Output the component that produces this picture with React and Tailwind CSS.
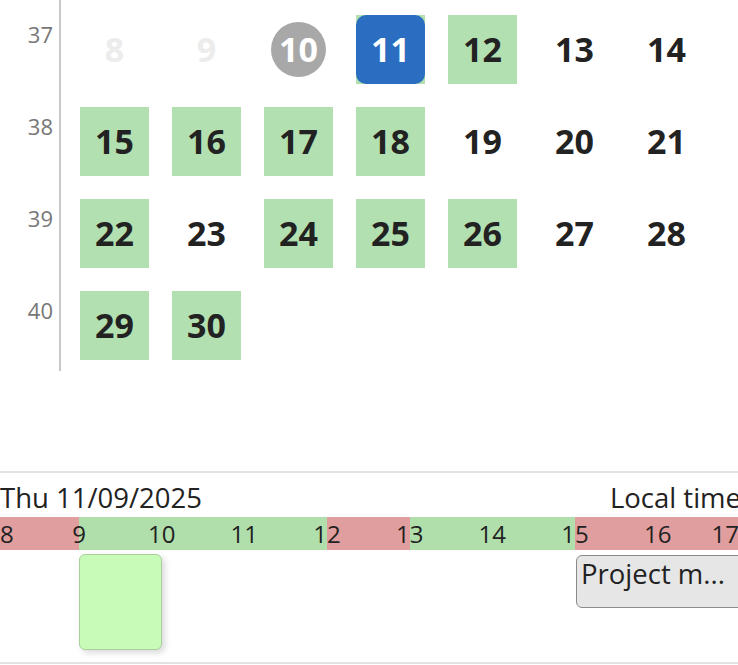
import React from 'react';

const weeks = [
  { no: 37, days: [8, 9, 10, 11, 12, 13, 14] },
  { no: 38, days: [15, 16, 17, 18, 19, 20, 21] },
  { no: 39, days: [22, 23, 24, 25, 26, 27, 28] },
  { no: 40, days: [29, 30] },
];

const available = new Set([11, 12, 15, 16, 17, 18, 22, 24, 25, 26, 29, 30]);
const past = new Set([8, 9]);
const TODAY = 10;
const SELECTED = 11;

const HOUR_W = 82.67;
const START_X = -3.67;
const hourX = (h) => START_X + (h - 8) * HOUR_W;

const segments = [
  { from: 8, to: 9, free: false },
  { from: 9, to: 12, free: true },
  { from: 12, to: 13, free: false },
  { from: 13, to: 15, free: true },
  { from: 15, to: 18, free: false },
];

const DayCell = ({ day }) => {
  if (day === TODAY) {
    return (
      <div className="flex items-center justify-center">
        <div className="w-[55px] h-[55px] rounded-full bg-[#a8a8a8] flex items-center justify-center text-white text-[34px] font-bold">
          {day}
        </div>
      </div>
    );
  }
  if (day === SELECTED) {
    return (
      <div className="bg-[#b2e0b0]">
        <div className="w-full h-full rounded-[10px] bg-[#2b6dc0] flex items-center justify-center text-white text-[34px] font-bold">
          {day}
        </div>
      </div>
    );
  }
  return (
    <div
      className={
        'flex items-center justify-center text-[34px] font-bold ' +
        (past.has(day) ? 'text-[#ececec]' : 'text-[#222]') +
        (available.has(day) ? ' bg-[#b2e0b0]' : '')
      }
    >
      {day}
    </div>
  );
};

export default function App() {
  return (
    <div
      className="w-[738px] h-[665px] overflow-hidden bg-white"
      style={{ fontFamily: '"Open Sans", "Noto Sans", sans-serif' }}
    >
      {/* Month grid */}
      <div className="flex h-[371px]">
        <div className="w-[59px] flex flex-col pt-[15px] gap-[23px] pr-[6px]">
          {weeks.map((w) => (
            <div key={w.no} className="h-[69px] pt-[8px] text-right text-[22px] leading-[22px] text-[#777]">
              {w.no}
            </div>
          ))}
        </div>
        <div className="w-[2px] bg-[#c8c8c8]" />
        <div className="pl-[19px] pt-[15px]">
          <div className="grid grid-cols-[repeat(7,69px)] auto-rows-[69px] gap-[23px]">
            {weeks.flatMap((w) => w.days.map((d) => <DayCell key={d} day={d} />))}
          </div>
        </div>
      </div>

      {/* Day schedule */}
      <div className="mt-[100px] w-[741px] border-t-2 border-b-2 border-[#e2e2e2] text-[#222]">
        <div className="h-[44px] flex items-end justify-between pb-[3px] text-[27.5px] leading-[32px] whitespace-nowrap">
          <span>Thu 11/09/2025</span>
          <span>Local time</span>
        </div>

        <div className="relative h-[33px] overflow-hidden">
          <div className="flex h-full" style={{ marginLeft: START_X }}>
            {segments.map((s) => (
              <div
                key={s.from}
                className={s.free ? 'shrink-0 h-full bg-[#b0dfab]' : 'shrink-0 h-full bg-[#e09e9e]'}
                style={{ width: (s.to - s.from) * HOUR_W }}
              />
            ))}
          </div>
          {[8, 9, 10, 11, 12, 13, 14, 15, 16, 17].map((h) => (
            <span
              key={h}
              className={
                'absolute top-0 h-full flex items-center text-[24px] leading-none ' +
                (h === 8 ? '' : h === 17 ? '-translate-x-full' : '-translate-x-1/2')
              }
              style={{ left: h === 8 ? 0 : h === 17 ? 739 : hourX(h) }}
            >
              {h}
            </span>
          ))}
        </div>

        <div className="relative h-[112px]">
          <div className="absolute left-[79px] top-[4px] w-[83px] h-[96px] rounded-[6px] bg-[#c8fbb8] border border-[#a9cf9f] shadow-[3px_3px_6px_rgba(0,0,0,0.15)]" />
          <div className="absolute left-[576px] top-[5px] w-[172px] h-[53px] rounded-[6px] bg-[#e6e6e6] border-[1.5px] border-[#8a8a8a] pl-[4px] pt-[2px] text-[27.5px] leading-[32px] whitespace-nowrap">
            Project m...
          </div>
        </div>
      </div>
    </div>
  );
}
